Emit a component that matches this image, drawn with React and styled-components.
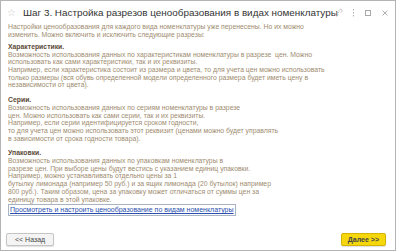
import React from 'react'
import styled, { createGlobalStyle } from 'styled-components';

const Global = createGlobalStyle`
  html, body { margin: 0; padding: 0; background: #fff; }
  body { font-family: "Liberation Sans", Arial, sans-serif; }
`;

const Window = styled.div`
  width: 394px;
  height: 249px;
  border: 1px solid #b4b4b4;
  background: #fff;
  display: flex;
  flex-direction: column;
  overflow: hidden;
`;

const TitleBar = styled.div`
  height: 21px;
  display: flex;
  align-items: center;
  padding: 1px 6px 0 6px;
  gap: 7px;
`;

const Star = styled.span`
  color: #c4c4c4;
  font-size: 10px;
  line-height: 1;
`;

const Title = styled.h1`
  flex: 1;
  min-width: 0;
  margin: 0;
  font-size: 9.9px;
  font-weight: 400;
  color: #333;
  white-space: nowrap;
`;

const Tools = styled.div`
  flex: none;
  display: flex;
  align-items: center;
  gap: 9px;
`;

const Body = styled.div`
  flex: 1;
  padding: 0 7px;
  display: flex;
  flex-direction: column;
  align-items: flex-start;
  font-size: 6.85px;
  line-height: 7.7px;
  color: #a08c70;
`;

const Para = styled.p`
  margin: 0 0 ${p => p.gap ?? 7}px;
`;

const Head = styled.div`
  color: #5c4a38;
  font-weight: 700;
`;

const LinkBox = styled.div`
  margin-top: 1px;
  height: 10px;
  border: 1px solid #a8b4c4;
  display: flex;
  align-items: center;
  padding: 0 1px;
  white-space: nowrap;
`;

const Link = styled.a`
  color: #2a4fb0;
  text-decoration: underline;
  font-size: 7px;
`;

const Footer = styled.div`
  display: flex;
  justify-content: space-between;
  align-items: center;
  padding: 0 9px 4px 5px;
  margin-top: auto;
`;

const Button = styled.button`
  height: 13px;
  padding: 0 ${p => p.primary ? 6 : 8}px;
  font-family: "Liberation Sans", Arial, sans-serif;
  font-size: 7px;
  font-weight: ${p => p.primary ? 700 : 400};
  color: #444;
  background: ${p => p.primary ? '#f6d70c' : '#f4f4f4'};
  border: 1px solid ${p => p.primary ? '#d4b400' : '#c4c4c4'};
  border-radius: 2px;
  box-shadow: 0 1px 1px rgba(0,0,0,0.12);
`;

function App(){
  return(
    <>
      <Global />
      <Window>
        <TitleBar>
          <Star>☆</Star>
          <Title>Шаг 3. Настройка разрезов ценообразования в видах номенклатуры</Title>
          <Tools>
            <svg width="9" height="9" viewBox="0 0 10 10" fill="none" stroke="#bcbcbc" strokeWidth="1">
              <path d="M4 6l2-2M3 5L1.8 6.2a1.6 1.6 0 0 0 2.3 2.3L5.3 7.3M5 3l1.2-1.2a1.6 1.6 0 0 1 2.3 2.3L7.3 5.3"/>
            </svg>
            <svg width="3" height="9" viewBox="0 0 3 9" fill="#a8a8a8">
              <rect x="1" y="1" width="1" height="1.4"/><rect x="1" y="4" width="1" height="1.4"/><rect x="1" y="7" width="1" height="1.4"/>
            </svg>
            <svg width="8" height="8" viewBox="0 0 8 8" fill="none" stroke="#a8a8a8">
              <rect x="1.5" y="1.5" width="5" height="5"/>
            </svg>
            <svg width="8" height="8" viewBox="0 0 8 8" stroke="#a8a8a8" strokeWidth="0.9">
              <path d="M1.5 1.5l5 5M6.5 1.5l-5 5"/>
            </svg>
          </Tools>
        </TitleBar>
        <Body>
          <Para gap={4.5}>Настройки ценообразования для каждого вида номенклатуры уже перенесены. Но их можно<br/>изменить. Можно включить и исключить следующие разрезы:</Para>
          <Head>Характеристики.</Head>
          <Para>Возможность использования данных по характеристикам номенклатуры в разрезе&nbsp; цен. Можно<br/>использовать как сами характеристики, так и их реквизиты.<br/>Например, если характеристика состоит из размера и цвета, то для учета цен можно использовать<br/>только размеры (вся обувь определенной модели определенного размера будет иметь цену в<br/>независимости от цвета).</Para>
          <Head>Серии.</Head>
          <Para>Возможность использования данных по сериям номенклатуры в разрезе<br/>цен. Можно использовать как сами серии, так и их реквизиты.<br/>Например, если серии идентифицируется сроком годности,<br/>то для учета цен можно использовать этот реквизит (ценами можно будет управлять<br/>в зависимости от срока годности товара).</Para>
          <Head>Упаковки.</Head>
          <Para gap={0}>Возможность использования данных по упаковкам номенклатуры в<br/>разрезе цен. При выборе цены будут вестись с указанием единиц упаковки.<br/>Например, можно устанавливать отдельно цены за 1<br/>бутылку лимонада (например 50 руб.) и за ящик лимонада (20 бутылок) например<br/>800 руб.). Таким образом, цена за упаковку может отличаться от суммы цен за<br/>единицу товара в этой упаковке.</Para>
          <LinkBox>
            <Link href="#">Просмотреть и настроить ценообразование по видам номенклатуры</Link>
          </LinkBox>
        </Body>
        <Footer>
          <Button>&lt;&lt; Назад</Button>
          <Button primary>Далее &gt;&gt;</Button>
        </Footer>
      </Window>
    </>
  )
}

export default App
